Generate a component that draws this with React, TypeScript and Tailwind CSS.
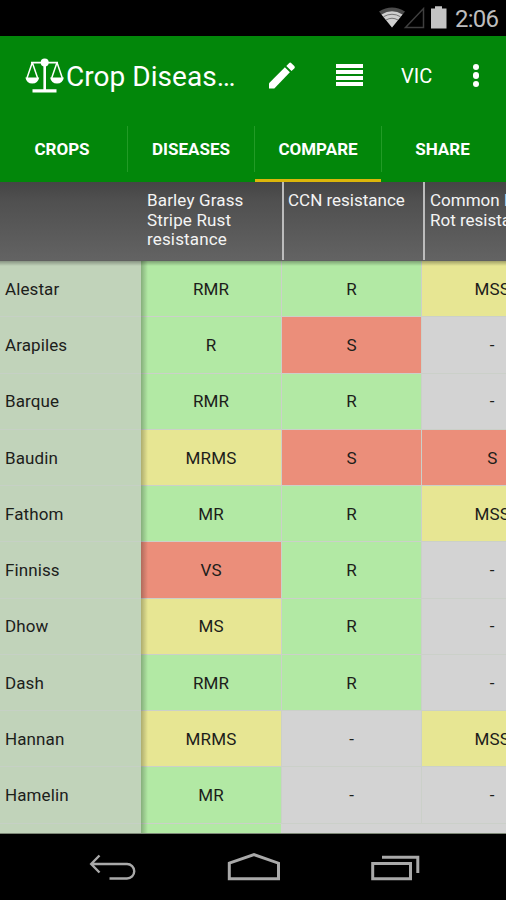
import React from "react";

type Row = { name: string; values: [string, string, string] };

const rows: Row[] = [
  { name: "Alestar", values: ["RMR", "R", "MSS"] },
  { name: "Arapiles", values: ["R", "S", "-"] },
  { name: "Barque", values: ["RMR", "R", "-"] },
  { name: "Baudin", values: ["MRMS", "S", "S"] },
  { name: "Fathom", values: ["MR", "R", "MSS"] },
  { name: "Finniss", values: ["VS", "R", "-"] },
  { name: "Dhow", values: ["MS", "R", "-"] },
  { name: "Dash", values: ["RMR", "R", "-"] },
  { name: "Hannan", values: ["MRMS", "-", "MSS"] },
  { name: "Hamelin", values: ["MR", "-", "-"] },
];

const cellColors: Record<string, string> = {
  R: "bg-[#b2e9a4]",
  RMR: "bg-[#b2e9a4]",
  MR: "bg-[#b2e9a4]",
  MRMS: "bg-[#e7e693]",
  MS: "bg-[#e7e693]",
  MSS: "bg-[#e7e693]",
  S: "bg-[#eb8e7a]",
  VS: "bg-[#eb8e7a]",
  "-": "bg-[#d3d3d3]",
};

function StatusBar() {
  return (
    <div className="flex h-[36px] shrink-0 items-center justify-end bg-black pr-[8px]">
      <svg width="77" height="36" viewBox="0 0 77 36" className="shrink-0">
        <path d="M1 11.5Q14 3.5 27 11.5L14 27.5Z" fill="#4c4c4c" />
        <path d="M3.5 14.5Q14 8 24.5 14.5L14 27.5Z" fill="#cfcfcf" />
        <path d="M5.5 16.7Q14 11.8 22.5 16.7M8 20Q14 16.5 20 20" fill="none" stroke="#6a6a6a" strokeWidth="0.9" />
        <path d="M27.5 27.4L45.5 8.5V27.4Z" fill="none" stroke="#3f3f3f" strokeWidth="1.5" />
        <path d="M53 8.5H57V6.3H64V8.5H68.5V28.5H53Z" fill="#c4c4c4" />
      </svg>
      <span className="w-[43px] pt-[2px] text-[24px] leading-[34px] tracking-[-0.8px] text-[#bdbdbd]">2:06</span>
    </div>
  );
}

function Scales() {
  return (
    <svg width="41" height="38" viewBox="0 0 41 38" className="shrink-0 text-white" fill="currentColor">
      <circle cx="19.7" cy="5.5" r="4" />
      <path d="M6 4.7H33V6.6H6ZM18.4 6H21V33H18.4ZM7.5 32.2H31.5V35.4H7.5Z" />
      <path d="M7.3 5.5L2 21M7.3 5.5L12.6 21M32 5.5L26.7 21M32 5.5L37.3 21" stroke="currentColor" strokeWidth="1.5" />
      <path d="M.4 20.5H14.2Q13 26.6 7.3 26.6T.4 20.5ZM25.1 20.5H38.9Q37.7 26.6 32 26.6T25.1 20.5Z" />
    </svg>
  );
}

function ActionBar() {
  return (
    <div className="flex h-[80px] shrink-0 items-center text-white">
      <div className="flex w-[269px] items-center pl-[25px]">
        <Scales />
        <h1 className="pt-px text-[28px] leading-[36px] font-normal tracking-[0.05px] whitespace-nowrap">Crop Diseas…</h1>
      </div>
      <svg width="27" height="28" viewBox="0 0 27 28" fill="currentColor" className="shrink-0">
        <path d="M0 21.2L15.9 5.3L20.9 10.3L5.3 26.4H0Z" />
        <path d="M17.3 3.9L20 1.2Q21.2 0 22.4 1.2L25.3 4.1Q26.5 5.3 25.3 6.5L22.5 9Z" />
      </svg>
      <div className="ml-[40px] flex w-[27px] flex-col gap-[2.5px] pb-[2px]">
        <span className="h-[3.5px] bg-white" />
        <span className="h-[3.5px] bg-white" />
        <span className="h-[3.5px] bg-white" />
        <span className="h-[3.5px] bg-white" />
      </div>
      <span className="ml-[38px] w-[34px] text-[20px]">VIC</span>
      <div className="ml-[37.5px] flex flex-col gap-[2px] pb-px">
        <span className="size-[6.5px] rounded-full bg-white" />
        <span className="size-[6.5px] rounded-full bg-white" />
        <span className="size-[6.5px] rounded-full bg-white" />
      </div>
    </div>
  );
}

function Tabs() {
  const divider = <span className="h-[46px] w-px shrink-0 bg-[#229b26]" />;
  return (
    <nav className="flex h-[66px] shrink-0 items-center text-center text-[17px] font-bold text-white">
      <span className="w-[127px] pt-[2px] pr-[3px]">CROPS</span>
      {divider}
      <span className="w-[126px] pt-[2px]">DISEASES</span>
      {divider}
      <span className="flex h-full w-[126px] items-center justify-center border-b-[3px] border-[#dcb60a] pt-[5px]">COMPARE</span>
      {divider}
      <span className="w-[121px] pt-[2px]">SHARE</span>
    </nav>
  );
}

const headerCell = "h-full w-[141px] shrink-0 pt-[9px] text-[17px] leading-[19.5px] text-[#f4f4f4]";

function TableHeader() {
  return (
    <div className="flex h-[79px] shrink-0 overflow-hidden border-b border-[#606060] bg-linear-to-b from-[#454545] from-0% via-[#505050] via-25% to-[#636363]">
      <div className="w-[141px] shrink-0" />
      <div className={headerCell + " pl-[6px] tracking-[0.15px]"}>
        Barley Grass
        <br />
        Stripe Rust
        <br />
        resistance
      </div>
      <div className={headerCell + " border-l-2 border-[#bcbcbc] pl-[4px]"}>CCN resistance</div>
      <div className={headerCell + " border-l-2 border-[#bcbcbc] pl-[5px] whitespace-nowrap"}>
        Common Root
        <br />
        Rot resistance
      </div>
    </div>
  );
}

function Cell({ value }: { value: string }) {
  return (
    <div className={"flex w-[140.6px] shrink-0 items-center justify-center border-r border-b border-[#cbd0c9] pt-[2px] text-[17px] tracking-[0.2px] " + cellColors[value]}>
      {value}
    </div>
  );
}

function Table() {
  return (
    <div className="relative min-h-0 flex-1 overflow-hidden bg-[#d3d3d3] text-[#1c201a]">
      {rows.map((row) => (
        <div key={row.name} className="flex h-[56.25px]">
          <div className="flex w-[141.3px] shrink-0 items-center border-b border-[#c6d0c5] bg-[#c1d3ba] pt-[2px] pl-[5px] text-[17px] tracking-[0.1px]">{row.name}</div>
          {row.values.map((value, i) => (
            <Cell key={i} value={value} />
          ))}
        </div>
      ))}
      <div className="flex h-[12px]">
        <div className="w-[141.3px] bg-[#c1d3ba]" />
        <div className="w-[139.6px] bg-[#b2e9a4]" />
      </div>
      <div className="absolute inset-y-0 left-[141px] w-[7px] bg-linear-to-r from-black/25 to-transparent" />
      <div className="absolute inset-x-0 top-0 h-[5px] bg-linear-to-b from-black/30 to-transparent" />
      <div className="absolute inset-x-0 bottom-0 h-px bg-[#7c8776]" />
    </div>
  );
}

function NavBar() {
  return (
    <div className="flex h-[66px] shrink-0 items-center justify-between bg-black pt-[2px] pr-[86px] pl-[89px]">
      <svg width="48" height="30" viewBox="0 0 48 30" fill="none" stroke="#a9a9a9" strokeWidth="2.4">
        <path d="M10.5 2.5L2.2 11L10.5 19.5M2.5 11H38A7.2 7.2 0 0 1 38 25.5H20.5" />
      </svg>
      <svg width="54" height="30" viewBox="0 0 54 30" fill="none" stroke="#a9a9a9" strokeWidth="3">
        <path d="M2.3 10.2L27 1.7L51.5 10.2V25.7H2.3Z" />
      </svg>
      <svg width="50" height="30" viewBox="0 0 50 30" fill="none" stroke="#a9a9a9" strokeWidth="3">
        <path d="M2.7 10.5H40.5V25.7H2.7ZM12 4.3H47.8V20" />
      </svg>
    </div>
  );
}

export default function App() {
  return (
    <div className="flex h-[900px] w-[506px] flex-col overflow-hidden bg-[#02870a] [font-family:Roboto,sans-serif]">
      <StatusBar />
      <ActionBar />
      <Tabs />
      <TableHeader />
      <Table />
      <NavBar />
    </div>
  );
}
